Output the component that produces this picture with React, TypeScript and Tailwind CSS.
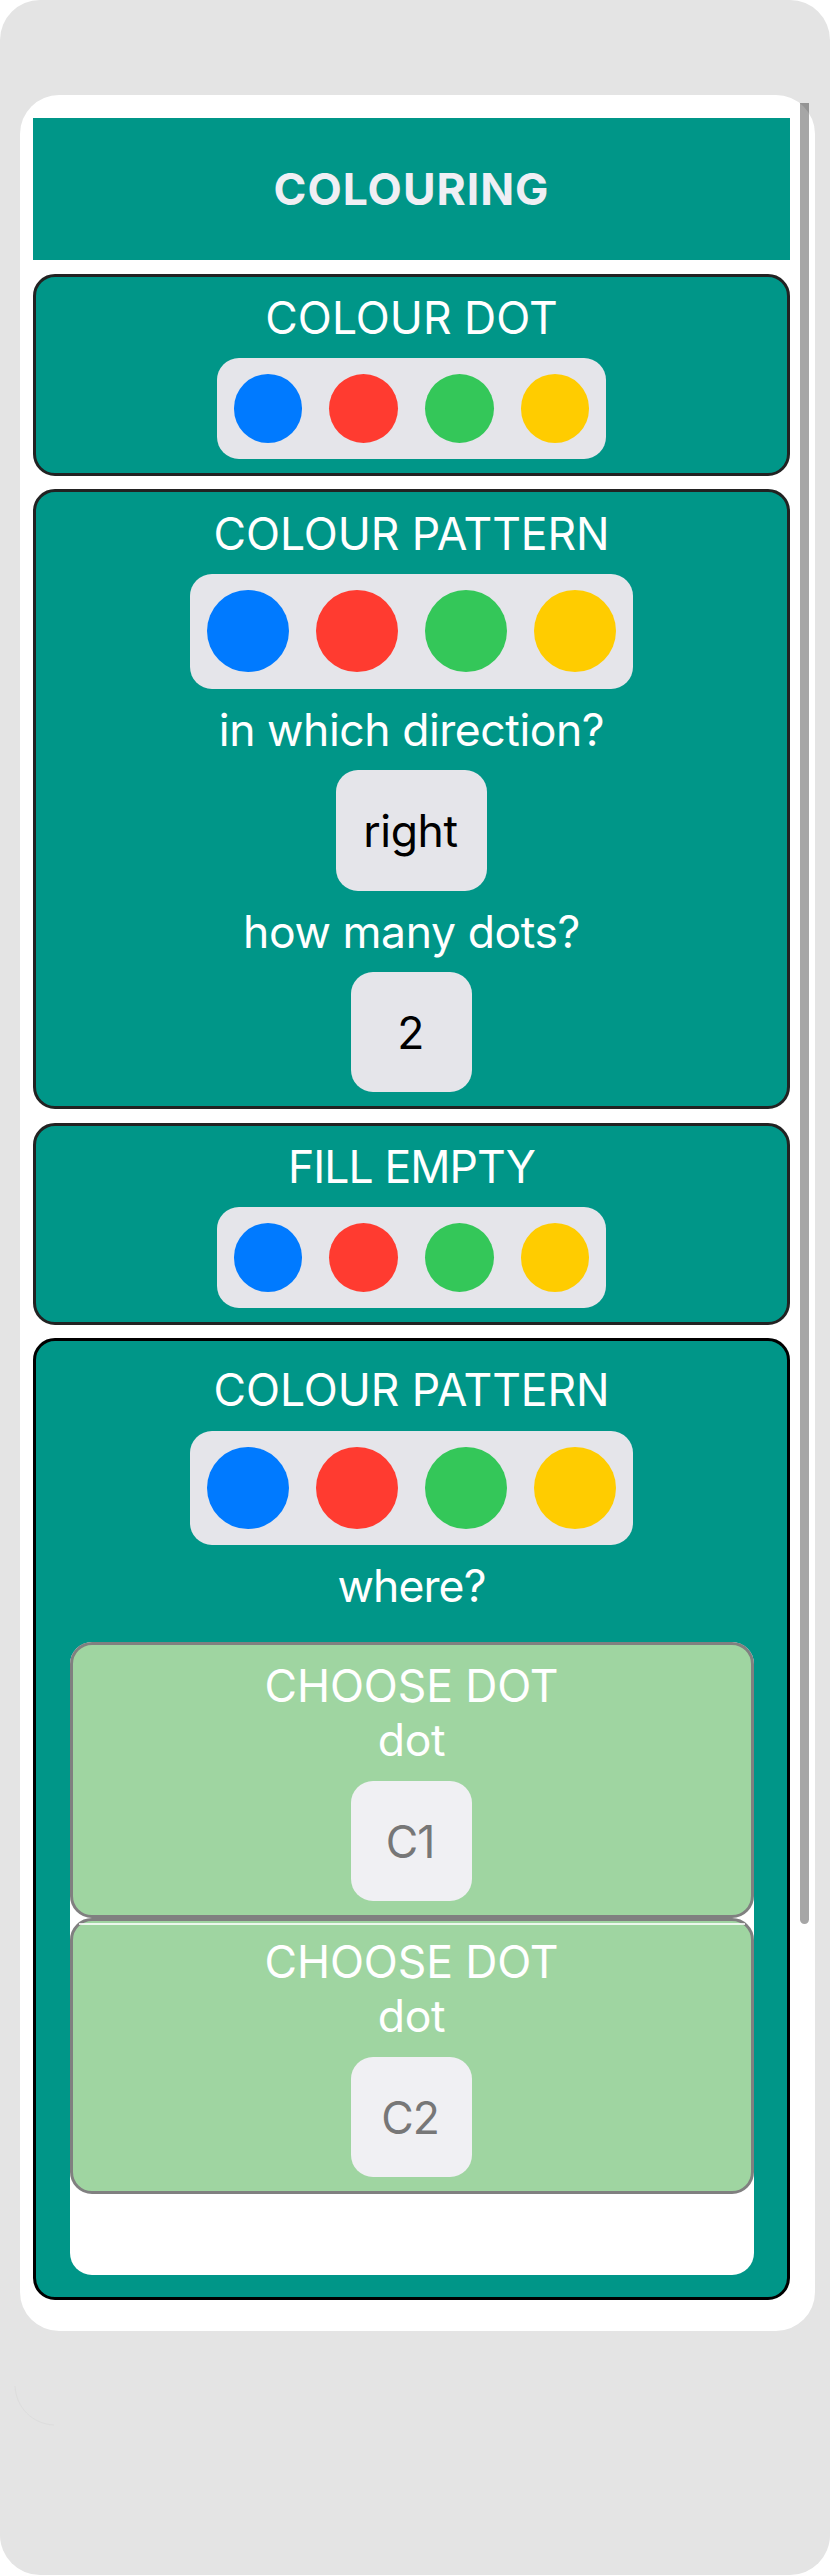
import type { ReactNode } from 'react'
import clsx from 'clsx'

const COLOURS = ['bg-[#007aff]', 'bg-[#ff3b30]', 'bg-[#34c759]', 'bg-[#ffcc00]']

function Label({ children, className }: { children: ReactNode; className?: string }) {
  return (
    <p className={clsx('text-[44.5px] leading-[54px] whitespace-nowrap', className)}>{children}</p>
  )
}

function Palette({ large }: { large?: boolean }) {
  return (
    <div className="flex gap-[27.3px] rounded-[22px] bg-[#e5e5ea] p-[16.4px]">
      {COLOURS.map((colour) => (
        <button
          key={colour}
          className={clsx('rounded-full', colour, large ? 'size-[82px]' : 'size-[68.5px]')}
        />
      ))}
    </div>
  )
}

function Value({ children, className }: { children: ReactNode; className?: string }) {
  return (
    <button
      className={clsx(
        'flex h-[120.5px] items-center justify-center rounded-[22px] bg-[#e5e5ea] pt-[2px] pr-[2px] text-[44.5px] leading-[54px] tracking-[-0.4px] text-black',
        className ?? 'w-[120.5px]',
      )}
    >
      {children}
    </button>
  )
}

function Block({ children, className }: { children: ReactNode; className?: string }) {
  return (
    <section
      className={clsx(
        'flex flex-col items-center gap-[13.6px] rounded-[22px] border-3 bg-[#009688] text-white',
        className,
      )}
    >
      {children}
    </section>
  )
}

function ChosenDot({ name }: { name: string }) {
  return (
    <div className="flex h-[276px] flex-col items-center rounded-[22px] border-3 border-[#808080] bg-[#9fd5a1] pt-[14px] text-white">
      <Label className="tracking-[-0.1px]">CHOOSE DOT</Label>
      <Label className="mb-[14px] tracking-[-0.4px]">dot</Label>
      <button className="flex size-[120.5px] items-center justify-center rounded-[22px] bg-[#f0f0f3] pt-[2px] pr-[3px] text-[44.5px] leading-[54px] tracking-[-1px] text-[#777777]">
        {name}
      </button>
    </div>
  )
}

export default function App() {
  return (
    <div className="bg-white font-['Inter',sans-serif]">
      <div className="relative h-[2575px] w-[830px] rounded-[40px] bg-[#e4e4e4] pt-[95px] pl-[20px]">
        <main className="flex h-[2236px] w-[795px] flex-col gap-[13.5px] rounded-[39px] bg-white pt-[22.5px] pr-[25px] pl-[13px]">
          <h1 className="flex h-[142.5px] shrink-0 items-center justify-center bg-[#009688] pt-[1px] text-[44.5px] leading-[54px] font-bold tracking-[1px] text-[#efeff4]">
            COLOURING
          </h1>

          <Block className="h-[202px] border-[#222222] pt-[14px]">
            <Label>COLOUR DOT</Label>
            <Palette />
          </Block>

          <Block className="h-[620px] border-[#222222] pt-[14.5px]">
            <Label className="tracking-[-0.1px]">COLOUR PATTERN</Label>
            <Palette large />
            <Label className="-mb-[1px] pt-[1px] tracking-[-0.45px]">in which direction?</Label>
            <Value className="w-[151.5px]">right</Value>
            <Label className="-mb-[1px] pt-[1px] tracking-[-0.4px]">how many dots?</Label>
            <Value>2</Value>
          </Block>

          <Block className="h-[202px] border-[#222222] pt-[14px]">
            <Label className="tracking-[-0.9px]">FILL EMPTY</Label>
            <Palette />
          </Block>

          <Block className="h-[962px] border-black pt-[22px]">
            <Label className="tracking-[-0.1px]">COLOUR PATTERN</Label>
            <Palette large />
            <Label className="tracking-[-0.9px]">where?</Label>
            <div className="relative mt-[15px] h-[633.5px] w-[684px] rounded-[22px] bg-white">
              <ChosenDot name="C1" />
              <ChosenDot name="C2" />
              <div className="absolute top-[281px] left-[9px] h-[2px] w-[666px] bg-white/80" />
            </div>
          </Block>
        </main>

        {/* scroll indicator */}
        <div className="absolute top-[103px] left-[800px] h-[1821px] w-[9px] rounded-b-full bg-black/35" />

        <svg className="absolute top-[2385px] left-[14px]" width="42" height="42" fill="none">
          <path d="M1 1C2 22 18 39 40 40" stroke="#dddddd" />
        </svg>
      </div>
    </div>
  )
}
